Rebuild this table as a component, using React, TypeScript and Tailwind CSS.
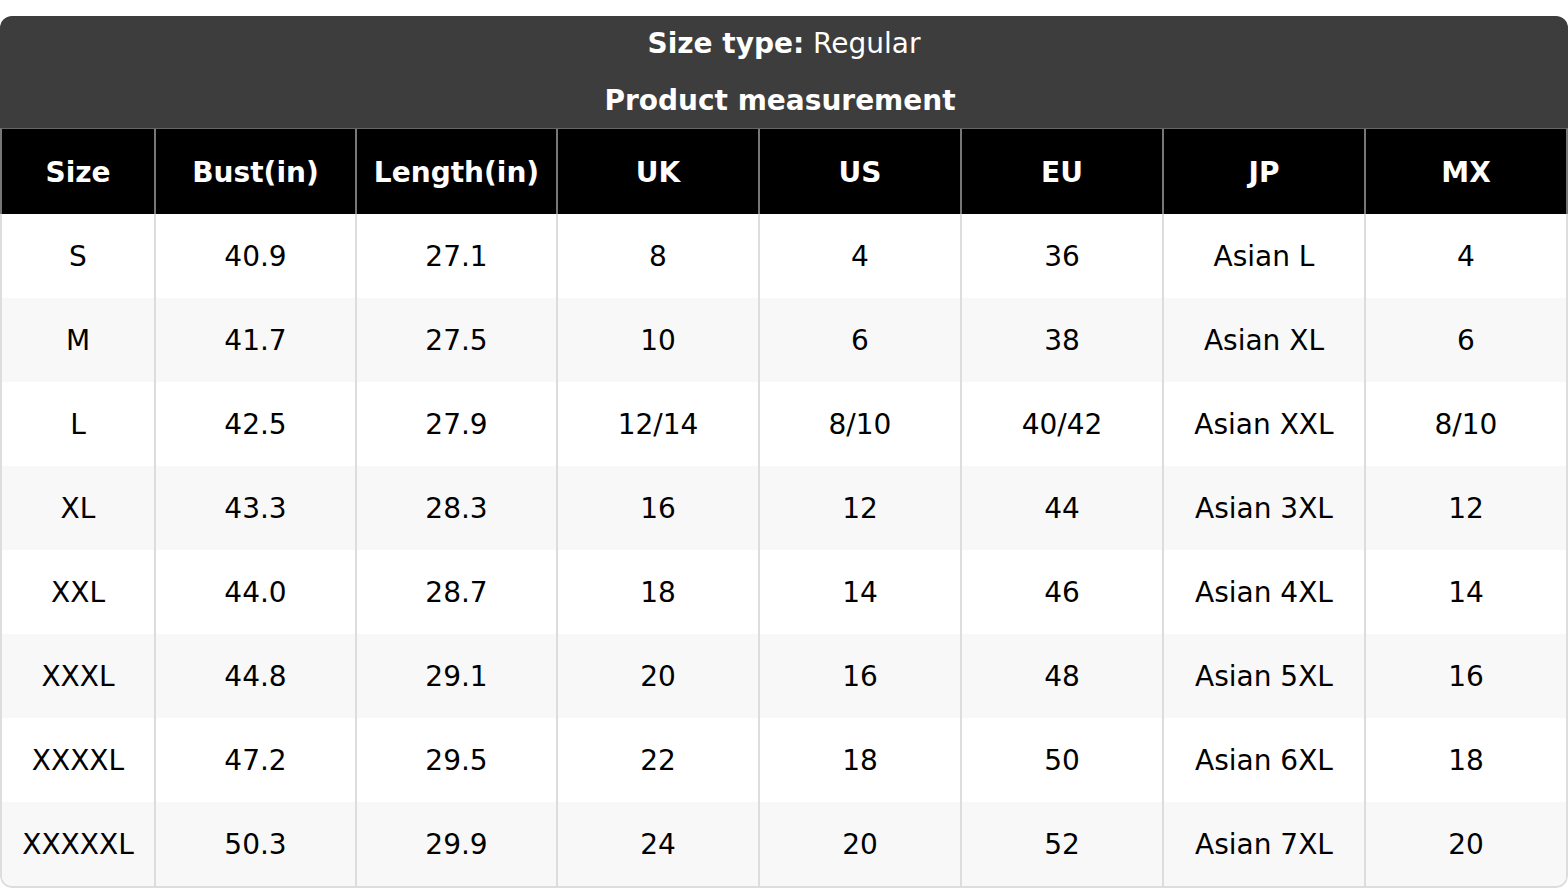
import React from "react";

const headers = ["Size", "Bust(in)", "Length(in)", "UK", "US", "EU", "JP", "MX"];
const rows: string[][] = [
  ["S", "40.9", "27.1", "8", "4", "36", "Asian L", "4"],
  ["M", "41.7", "27.5", "10", "6", "38", "Asian XL", "6"],
  ["L", "42.5", "27.9", "12/14", "8/10", "40/42", "Asian XXL", "8/10"],
  ["XL", "43.3", "28.3", "16", "12", "44", "Asian 3XL", "12"],
  ["XXL", "44.0", "28.7", "18", "14", "46", "Asian 4XL", "14"],
  ["XXXL", "44.8", "29.1", "20", "16", "48", "Asian 5XL", "16"],
  ["XXXXL", "47.2", "29.5", "22", "18", "50", "Asian 6XL", "18"],
  ["XXXXXL", "50.3", "29.9", "24", "20", "52", "Asian 7XL", "20"],
];

export default function App() {
  return (
    <div
      className="w-[1568px] h-[888px] bg-white pt-4 overflow-hidden"
      style={{ fontFamily: '"DejaVu Sans", "Liberation Sans", sans-serif' }}
    >
      <div className="rounded-xl overflow-hidden">
        <div className="bg-[#3d3d3d] h-[112px] flex flex-col text-white text-[28px]">
          <div className="h-[56px] flex items-center justify-center">
            <span className="font-bold">Size type:</span>
            <span>&nbsp;Regular</span>
          </div>
          <div className="h-[56px] flex items-center justify-center font-bold pt-[2px] pr-[8px]">
            Product measurement
          </div>
        </div>
        <div className="border-t border-[#666] bg-black border-x-2 border-x-[#777] grid grid-cols-[154px_201px_201px_202px_202px_202px_202px_1fr] h-[86px]">
          {headers.map((h, i) => (
            <div
              key={h}
              className={
                "flex items-center justify-center text-white font-bold text-[28px] pt-[2px] " +
                (i < headers.length - 1 ? "border-r-2 border-[#777]" : "")
              }
            >
              {h}
            </div>
          ))}
        </div>
        <div className="border-x-2 border-b-2 border-[#dddddd] rounded-b-xl overflow-hidden">
          {rows.map((r, ri) => (
            <div
              key={ri}
              className={
                "grid grid-cols-[154px_201px_201px_202px_202px_202px_202px_1fr] h-[84px] " +
                (ri % 2 === 1 ? "bg-[#f8f8f8]" : "bg-white")
              }
            >
              {r.map((c, ci) => (
                <div
                  key={ci}
                  className={
                    "flex items-center justify-center text-black text-[28px] pt-[2px] " +
                    (ci < r.length - 1 ? "border-r-2 border-[#dddddd]" : "")
                  }
                >
                  {c}
                </div>
              ))}
            </div>
          ))}
        </div>
      </div>
    </div>
  );
}
